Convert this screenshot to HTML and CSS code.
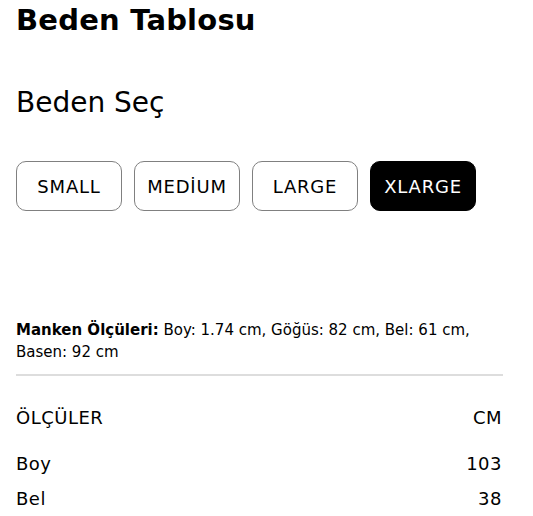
FILE: index.html
```html
<!DOCTYPE html>
<html lang="tr">
<head>
<meta charset="utf-8">
<title>Beden Tablosu</title>
<link rel="stylesheet" href="styles.css">
</head>
<body>
<div class="page">
  <h1 class="title">Beden Tablosu</h1>
  <h2 class="subtitle">Beden Seç</h2>
  <div class="sizes">
    <button class="size">SMALL</button>
    <button class="size">MEDİUM</button>
    <button class="size">LARGE</button>
    <button class="size active">XLARGE</button>
  </div>
  <p class="model"><strong>Manken Ölçüleri:</strong> Boy: 1.74 cm, Göğüs: 82 cm, Bel: 61 cm, Basen: 92 cm</p>
  <div class="divider"></div>
  <div class="table">
    <div class="row head"><span>ÖLÇÜLER</span><span>CM</span></div>
    <div class="row"><span>Boy</span><span>103</span></div>
    <div class="row"><span>Bel</span><span>38</span></div>
  </div>
</div>
</body>
</html>
```
FILE: styles.css
```css
* { box-sizing: border-box; }
body {
  margin: 0;
  background: #fff;
  color: #000;
  font-family: "DejaVu Sans", sans-serif;
}
.page {
  width: 503px;
  padding: 0 0 0 16px;
}
.title {
  margin: 0;
  font-size: 29px;
  line-height: 40px;
  font-weight: 700;
  letter-spacing: 0.2px;
}
.subtitle {
  margin: 43px 0 0;
  font-size: 28px;
  line-height: 40px;
  font-weight: 400;
}
.sizes {
  display: flex;
  gap: 12px;
  margin-top: 38px;
}
.size {
  width: 106px;
  height: 50px;
  border: 1px solid #808080;
  border-radius: 10px;
  background: #fff;
  color: #000;
  font-family: inherit;
  font-size: 18px;
  font-weight: 400;
  letter-spacing: 0.8px;
  padding: 0;
}
.size.active {
  background: #000;
  border-color: #000;
  color: #fff;
}
.model {
  margin: 108px 0 0;
  font-size: 15px;
  line-height: 22px;
}
.model strong { font-weight: 700; }
.divider {
  margin-top: 11px;
  height: 2px;
  background: #ddd;
}
.table {
  margin-top: 23px;
  padding-right: 1px;
}
.row {
  display: flex;
  justify-content: space-between;
  height: 35px;
  align-items: center;
  font-size: 18px;
  letter-spacing: 0.5px;
}
.row.head {
  height: 36px;
  margin-bottom: 11px;
}
```
